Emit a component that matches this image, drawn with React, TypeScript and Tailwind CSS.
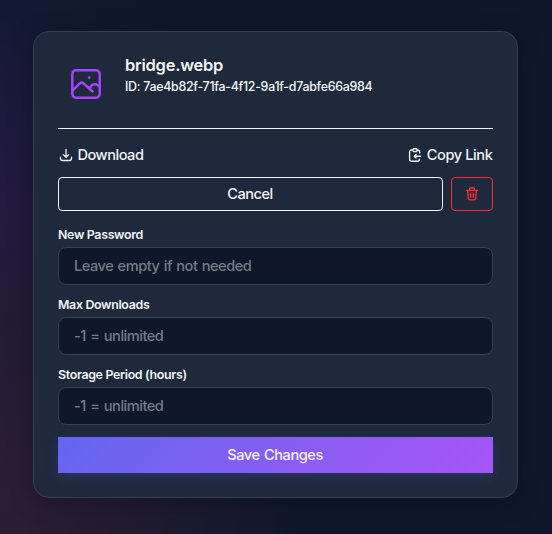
import React from "react";

const fields = [
  { label: "New Password", hint: "Leave empty if not needed" },
  { label: "Max Downloads", hint: "-1 = unlimited" },
  { label: "Storage Period (hours)", hint: "-1 = unlimited" },
];

function ImageIcon() {
  return (
    <svg className="size-10 text-[#a742ff]" viewBox="0 0 40 40" fill="none" stroke="currentColor" strokeWidth="2.5" strokeLinecap="round" strokeLinejoin="round">
      <rect x="6.3" y="6.3" width="27.4" height="27.4" rx="3.6" />
      <path d="m6.5 26.5 7.1-6.9a3 3 0 0 1 4.2 0l8.8 7.9M23.6 24.2l1.5-2.2a4.9 4.9 0 0 1 8.2 1" />
      <path d="M23.2 13.6h.02" strokeWidth="2.7" />
    </svg>
  );
}

function DownloadIcon() {
  return (
    <svg className="size-4" viewBox="0 0 16 16" fill="none" stroke="currentColor" strokeWidth="1.3" strokeLinecap="round" strokeLinejoin="round">
      <path d="M8 2.4v7.6M5.3 7.6 8 10.2l2.7-2.6M2.5 10.2v1.3a2 2 0 0 0 2 2h7a2 2 0 0 0 2-2v-1.3" />
    </svg>
  );
}

function ClipboardIcon() {
  return (
    <svg className="size-4" viewBox="0 0 16 16" fill="none" stroke="currentColor" strokeWidth="1.35" strokeLinecap="round" strokeLinejoin="round">
      <path d="M5.3 3H4.6a2 2 0 0 0-2 2v7.2a2 2 0 0 0 2 2h5.8a2 2 0 0 0 2-2M10.2 3h.4a2 2 0 0 1 2 2v1" />
      <path d="M6.6 1.7h2.8l1 1.4-1 1.5H6.6l-1-1.5z" />
      <path d="M13.6 9.2H7.2M9.1 7.3 7.2 9.2l1.9 1.9" />
    </svg>
  );
}

function TrashIcon() {
  return (
    <svg className="size-4" viewBox="0 0 16 16" fill="none" stroke="currentColor" strokeWidth="1.4" strokeLinecap="round" strokeLinejoin="round">
      <path d="M2.5 4.4h11M3.7 4.6l.6 7.7a1.8 1.8 0 0 0 1.8 1.6h3.8a1.8 1.8 0 0 0 1.8-1.6l.6-7.7M5.6 4.2V3a1.2 1.2 0 0 1 1.2-1.2h2.4A1.2 1.2 0 0 1 10.4 3v1.2M6.7 7.3v3.9M9.3 7.3v3.9" />
    </svg>
  );
}

export default function App() {
  return (
    <main className="h-[534px] w-[552px] overflow-hidden bg-[#0f172a] bg-[radial-gradient(circle_at_-30px_500px,#311e35_0,#311e3500_340px),radial-gradient(circle_at_-60px_190px,#291a48_0,#161a3a80_190px,#14183600_290px)] pt-[31px] pl-[33px] font-['Inter',sans-serif] text-[#f1f5f9]">
      <section className="flex h-[467px] w-[485px] flex-col rounded-2xl border border-[#334155] bg-[#1e293b] px-6 pt-6 shadow-[0_4px_24px_rgba(0,0,0,0.25)]">
        <header className="flex h-[73px] shrink-0 border-b border-[#f1f5f9]">
          <div className="flex h-14 w-14 items-center justify-center">
            <ImageIcon />
          </div>
          <div className="pl-[11px]">
            <h1 className="text-[16.5px] leading-[19px] font-semibold tracking-[-0.25px]">bridge.webp</h1>
            <p className="pt-[3px] text-[12.4px] leading-[18px] font-medium tracking-[-0.28px]">ID: 7ae4b82f-71fa-4f12-9a1f-d7abfe66a984</p>
          </div>
        </header>
        <div className="mt-4 flex h-5 justify-between text-[14.6px] leading-[21px] font-medium tracking-[-0.5px] [word-spacing:1px]">
          <button className="flex items-center gap-[3.5px]"><DownloadIcon />Download</button>
          <button className="flex items-center gap-[3.5px] pr-[0.5px] tracking-[-0.4px]"><ClipboardIcon />Copy Link</button>
        </div>
        <div className="mt-3 flex h-[34px] gap-2 text-[14.6px] font-medium tracking-[-0.5px]">
          <button className="flex-1 rounded border border-[#f1f5f9] pt-px pr-px">Cancel</button>
          <button className="flex w-[42px] items-center justify-center rounded border border-[#fb2c36] text-[#fb2c36]"><TrashIcon /></button>
        </div>
        <form className="flex flex-col pt-4">
          {fields.map(({ label, hint }) => (
            <label key={label} className="mb-3 block text-[12.4px] leading-4 font-semibold tracking-[-0.32px]">
              {label}
              <input placeholder={hint} className="mt-1 block h-[38px] w-full rounded-lg border border-[#334155] bg-[#0f172a] px-[15px] text-[14.6px] font-medium tracking-[-0.5px] [word-spacing:1px] placeholder:text-[#757b87]" />
            </label>
          ))}
          <button type="button" className="h-9 bg-[linear-gradient(135deg,#6366f1,#a855f7)] pt-px pr-px text-[14.6px] font-medium tracking-[-0.45px] [word-spacing:1px] shadow-[0_4px_12px_rgba(99,102,241,0.2)]">Save Changes</button>
        </form>
      </section>
    </main>
  );
}
